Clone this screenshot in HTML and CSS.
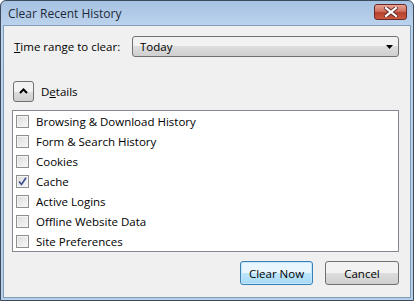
FILE: index.html
```html
<!DOCTYPE html>
<html>
<head>
<meta charset="utf-8">
<link rel="stylesheet" href="styles.css">
</head>
<body>
<div class="window">
  <div class="titlebar">
    <span class="title">Clear Recent History</span>
    <div class="close">
      <svg width="14" height="10" viewBox="0 0 14 10"><path d="M2 1 L12 9 M12 1 L2 9" stroke="#5a2a2a" stroke-width="4" stroke-linecap="square"/><path d="M2 1 L12 9 M12 1 L2 9" stroke="#fff" stroke-width="2.2" stroke-linecap="square"/></svg>
    </div>
  </div>
  <div class="client">
    <div class="range-row">
      <span class="label"><u>T</u>ime range to clear:</span>
      <div class="select">
        <span>Today</span>
        <svg width="7" height="4" viewBox="0 0 7 4"><path d="M0 0 H7 L3.5 4 Z" fill="#000"/></svg>
      </div>
    </div>
    <div class="details-row">
      <div class="toggle">
        <svg width="9" height="6" viewBox="0 0 9 6"><path d="M1 5 L4.5 1.5 L8 5" stroke="#000" stroke-width="2" fill="none"/></svg>
      </div>
      <span>D<u>e</u>tails</span>
    </div>
    <div class="list">
      <div class="item"><span class="cb"></span>Browsing &amp; Download History</div>
      <div class="item"><span class="cb"></span>Form &amp; Search History</div>
      <div class="item"><span class="cb"></span>Cookies</div>
      <div class="item"><span class="cb"><svg width="9" height="9" viewBox="0 0 9 9"><path d="M1 4.5 L3.5 7.5 L8 0.8" stroke="#3b4f8f" stroke-width="1.6" fill="none"/></svg></span>Cache</div>
      <div class="item"><span class="cb"></span>Active Logins</div>
      <div class="item"><span class="cb"></span>Offline Website Data</div>
      <div class="item"><span class="cb"></span>Site Preferences</div>
    </div>
    <div class="buttons">
      <button class="btn default">Clear Now</button>
      <button class="btn">Cancel</button>
    </div>
  </div>
</div>
</body>
</html>
```
FILE: styles.css
```css
html, body { margin: 0; padding: 0; }
body { width: 414px; height: 301px; overflow: hidden; font-family: "Open Sans", "Noto Sans", sans-serif; font-size: 11.5px; color: #000; }
.window {
  box-sizing: border-box;
  width: 414px; height: 301px;
  border: 1px solid #3c4a5a;
  border-radius: 6px 6px 0 0;
  background: linear-gradient(#a6c2e2, #bcd3ec 25px, #b5cfea);
  display: flex; flex-direction: column;
  padding: 0 2px 2px 2px;
}
.titlebar { height: 24px; display: flex; align-items: center; justify-content: space-between; padding: 0 4px 0 5px; }
.title { font-size: 12px; color: #1e2a3a; }
.close {
  width: 33px; height: 16px; margin-top: -3px;
  box-sizing: border-box;
  border: 1px solid #6b2a2a; border-radius: 3px;
  background: linear-gradient(#e8a393, #d07060 45%, #b8402c 55%, #c85a40);
  display: flex; align-items: center; justify-content: center;
}
.client {
  flex: 1;
  background: #f0f0f0;
  border: 1px solid #7f9db9;
  display: flex; flex-direction: column;
  padding: 10px 11px 11px 8px;
}
.range-row { display: flex; align-items: center; height: 21px; }
.label { width: 120px; box-sizing: border-box; padding-left: 2px; }
.select {
  flex: 1; height: 21px; box-sizing: border-box;
  border: 1px solid #707070; border-radius: 3px;
  background: linear-gradient(#f2f2f2 50%, #dddddd 50%, #cfcfcf);
  display: flex; align-items: center; justify-content: space-between;
  padding: 0 5px 0 7px;
}
.details-row { display: flex; align-items: center; margin-top: 23px; height: 22px; gap: 7px; padding-left: 1px; }
.toggle {
  width: 21px; height: 21px; box-sizing: border-box;
  border: 1px solid #707070; border-radius: 3px;
  background: linear-gradient(#f2f2f2 50%, #dddddd 50%, #cfcfcf);
  display: flex; align-items: center; justify-content: center;
}
.list {
  margin-top: 8px;
  height: 142px; box-sizing: border-box;
  border: 1px solid #828790;
  background: #fff;
  padding: 0 3px;
}
.item { height: 20px; display: flex; align-items: center; gap: 7px; }
.cb {
  width: 13px; height: 13px; box-sizing: border-box;
  border: 1px solid #8f8f8f;
  background: linear-gradient(135deg, #dcdcdc, #f8f8f8);
  box-shadow: inset 0 0 0 1px #f4f4f4;
  display: flex; align-items: center; justify-content: center;
}
.buttons { display: flex; justify-content: flex-end; gap: 12px; margin-top: 9px; }
.btn {
  width: 74px; height: 24px; box-sizing: border-box;
  font: inherit;
  border: 1px solid #707070; border-radius: 3px;
  background: linear-gradient(#f2f2f2 50%, #dddddd 50%, #cfcfcf);
  padding: 0;
}
.btn.default {
  width: 73px;
  border-color: #3c7fb1;
  background: linear-gradient(#eaf6fd 50%, #bee6fd 50%, #a7d9f5);
  box-shadow: inset 0 0 0 1px #c0e7fd;
}
```
